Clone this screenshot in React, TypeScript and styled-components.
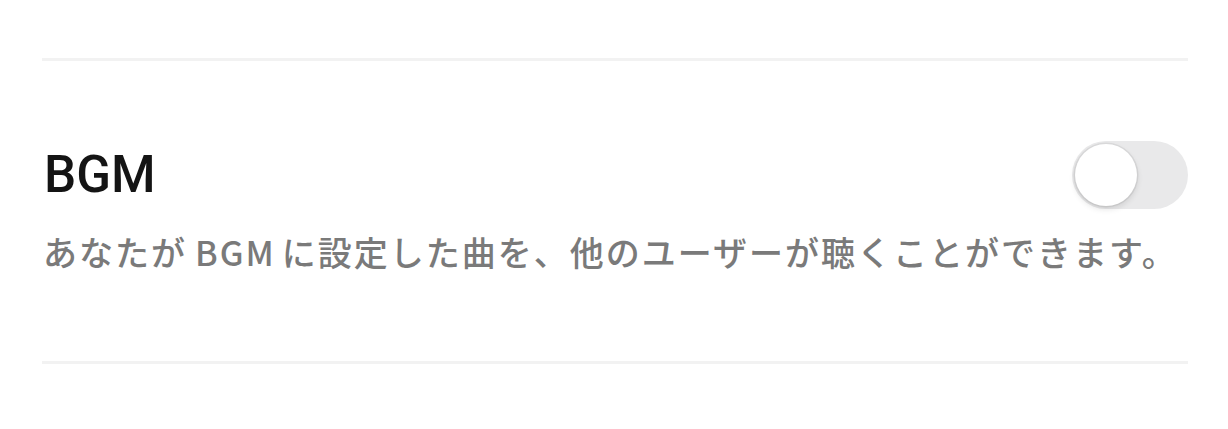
import { useState } from 'react';
import styled, { createGlobalStyle } from 'styled-components';

const GlobalStyle = createGlobalStyle`
  html, body {
    margin: 0;
    padding: 0;
    background: #ffffff;
  }
`;

const Page = styled.div`
  width: 1146px;
  padding: 58px 0 0 42px;
  font-family: 'Noto Sans CJK JP', 'Noto Sans', sans-serif;
`;

const Divider = styled.hr`
  margin: 0;
  border: none;
  height: 3px;
  background: #f2f2f2;
`;

const SettingRow = styled.section`
  padding: 80px 0 0;
  height: 220px;
`;

const RowHeader = styled.div`
  display: flex;
  align-items: center;
  justify-content: space-between;
`;

const Title = styled.h2`
  margin: 0 0 0 2px;
  font-family: Roboto, 'Liberation Sans', sans-serif;
  font-weight: 500;
  font-size: 51px;
  line-height: 68px;
  color: #141414;
`;

const Description = styled.p`
  margin: 18px 0 0 1px;
  font-size: 34px;
  font-weight: 500;
  line-height: 50px;
  letter-spacing: 2px;
  color: #7a7a7a;
  white-space: nowrap;
`;

// latin words get a little air between the kana around them
const Latin = styled.span`
  margin: 0 6px 0 8px;
`;

const Track = styled.button<{ $on: boolean }>`
  position: relative;
  flex: none;
  width: 116px;
  height: 68px;
  padding: 0;
  border: none;
  border-radius: 34px;
  background: ${({ $on }) => ($on ? '#34c759' : '#e9e9ea')};
  cursor: pointer;
  transition: background 0.2s;
`;

// knob sits over the track and slides across it
const Knob = styled.span<{ $on: boolean }>`
  position: absolute;
  top: 3px;
  left: ${({ $on }) => ($on ? '51px' : '3px')};
  width: 62px;
  height: 62px;
  border-radius: 50%;
  background: #ffffff;
  box-shadow: 0 0 0 1.5px rgba(0, 0, 0, 0.06), 0 3px 6px rgba(0, 0, 0, 0.12);
  transition: left 0.2s;
`;

const App = () => {
  const [bgm, setBgm] = useState(false);

  return (
    <Page>
      <GlobalStyle />
      <Divider />
      <SettingRow>
        <RowHeader>
          <Title>BGM</Title>
          <Track $on={bgm} aria-pressed={bgm} onClick={() => setBgm(!bgm)}>
            <Knob $on={bgm} />
          </Track>
        </RowHeader>
        <Description>
          あなたが<Latin>BGM</Latin>に設定した曲を、他のユーザーが聴くことができます。
        </Description>
      </SettingRow>
      <Divider />
    </Page>
  );
};

export default App;
